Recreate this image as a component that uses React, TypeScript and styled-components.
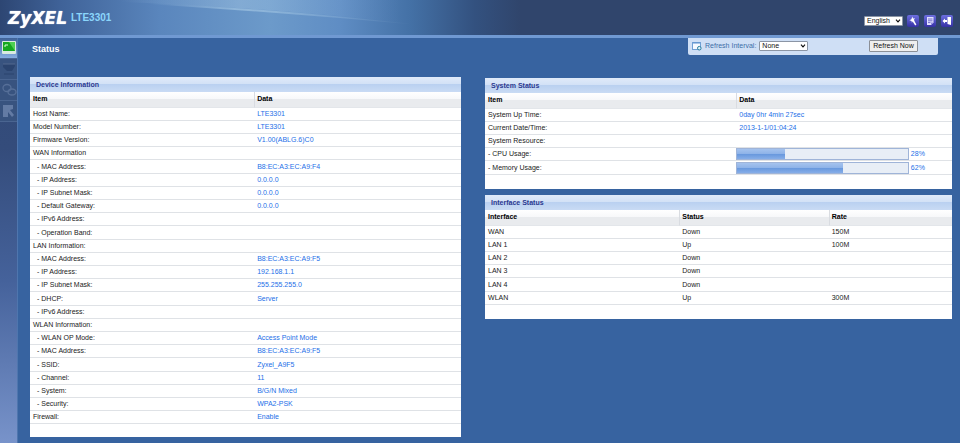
import React from "react";
import styled, { createGlobalStyle, css } from "styled-components";

const GlobalStyle = createGlobalStyle`
  * { box-sizing: border-box; }
  body {
    margin: 0;
    background: #3763a0;
    font-family: "Liberation Sans", Arial, sans-serif;
    font-size: 7px;
    line-height: 12px;
    color: #222;
  }
`;

const Page = styled.div`
  min-height: 100vh;
  display: flex;
  flex-direction: column;
`;

const Header = styled.header`
  position: relative;
  height: 38px;
  display: flex;
  align-items: center;
  gap: 4px;
  padding: 0 7px 0 8px;
  border-bottom: 3px solid #7099d2;
  background: linear-gradient(90deg, #2d4673 0, #3f6298 60px, #5a86bd 160px, #6c9aca 270px, #5f8dc4 340px, #4471a6 410px, #33517f 475px, #30456c 520px);
`;

const Swoosh = styled.svg`
  position: absolute;
  left: 0;
  top: 0;
  width: 460px;
  height: 35px;
`;

const Logo = styled.span`
  position: relative;
  font: italic bold 17px/34px "DejaVu Sans", sans-serif;
  color: #fff;
  text-shadow: 0 0 1px #fff;
`;

const Model = styled.span`
  position: relative;
  flex: 1;
  font-size: 10px;
  font-weight: bold;
  line-height: 32px;
  color: #8bd6fb;
`;

const Tools = styled.div`
  display: flex;
  align-items: center;
  gap: 4px;
  padding-top: 7px;
`;

const SelectBox = styled.span<{ $width: number }>`
  position: relative;
  display: flex;
  width: ${(p) => p.$width}px;
`;

const Select = styled.select`
  appearance: none;
  width: 100%;
  height: 10px;
  padding: 0 2px;
  border: 1px solid #8b95a5;
  border-radius: 1px;
  background: #fff;
  color: #111;
  font: 7px/8px "Liberation Sans", Arial, sans-serif;
`;

const Chevron = styled.svg`
  position: absolute;
  right: 2px;
  top: 3px;
  width: 6px;
  height: 4px;
  pointer-events: none;
`;

const IconButton = styled.button`
  width: 12px;
  height: 12px;
  padding: 0;
  border: 0;
  border-radius: 2px;
  background: linear-gradient(#6d6fe0, #3531a4);
  display: flex;
  & + & { margin-left: 1px; }
`;

const Body = styled.div`
  flex: 1;
  display: flex;
`;

const Sidebar = styled.nav`
  width: 18px;
  display: flex;
  flex-direction: column;
  background: linear-gradient(#314a78, #344c7b 110px, #45629b 60%, #7893ca);
  border-right: 1px solid #4f76ae;
`;

const NavItem = styled.a<{ $active?: boolean }>`
  height: 21px;
  display: flex;
  justify-content: center;
  align-items: center;
  border-bottom: 1px solid #4a6591;
  background: ${(p) => (p.$active ? "linear-gradient(#3f6298, #86ade0)" : "#38537f")};
`;

const Main = styled.main`
  flex: 1;
  min-width: 0;
  padding: 0 8px 6px 12px;
`;

const TopRow = styled.div`
  display: flex;
  justify-content: space-between;
  align-items: flex-start;
  padding: 0 14px 0 2px;
  margin-bottom: 22px;
`;

const Title = styled.h1`
  margin: 5px 0 0;
  font-size: 9px;
  line-height: 12px;
  color: #fff;
`;

const RefreshBar = styled.div`
  width: 250px;
  height: 17px;
  display: flex;
  align-items: center;
  gap: 3px;
  padding: 0 20px 1px 4px;
  border-radius: 0 0 2px 2px;
  background: #cfdff5;
  color: #3d6ea8;
`;

const RefreshButton = styled.button`
  width: 49px;
  height: 12px;
  margin-left: auto;
  padding: 0;
  border: 1px solid #8b8f96;
  border-radius: 1px;
  background: #efefef;
  color: #111;
  font: 7px/10px "Liberation Sans", Arial, sans-serif;
`;

const Panels = styled.div`
  display: grid;
  grid-template-columns: 12fr 13fr;
  gap: 24px;
  align-items: start;
`;

const Column = styled.div`
  display: flex;
  flex-direction: column;
  gap: 6px;
  padding-top: 1px;
`;

const Panel = styled.section<{ $space: number }>`
  padding-bottom: ${(p) => p.$space}px;
  background: #fff;
`;

const PanelTitle = styled.h2`
  margin: 0;
  padding: 1px 6px 0;
  height: 15px;
  font-size: 7px;
  line-height: 14px;
  color: #2b3990;
  background: linear-gradient(#e0eaf9, #d2e1f6 7px, #b9d0f0 7px, #c9dbf4);
`;

const Table = styled.table`
  width: 100%;
  table-layout: fixed;
  border-collapse: separate;
  border-spacing: 0;
`;

const HeadCell = styled.th<{ $width?: string }>`
  width: ${(p) => p.$width ?? "auto"};
  height: 16px;
  padding: 0 3px 2px;
  line-height: 13px;
  text-align: left;
  color: #000;
  background: linear-gradient(#fff, #f7f8fa 7px, #e9ebee 7px, #e9ebee);
  border-bottom: 1px solid #e3e6ea;
  & + & {
    padding-left: 2px;
    border-left: 1px solid #d9dce1;
  }
`;

const Row = styled.tr`
  height: 13px;
  &:nth-child(5n) { height: 14px; }
`;

const Cell = styled.td<{ $sub?: boolean; $value?: boolean; $flush?: boolean }>`
  padding: 0 3px;
  line-height: 12px;
  border-bottom: 1px solid #dfe2e6;
  white-space: nowrap;
  ${(p) => p.$sub && css`padding-left: 7px;`}
  ${(p) => p.$value && css`color: #1d6fe8;`}
  ${(p) => p.$flush && css`padding: 0;`}
`;

const Usage = styled.div`
  display: flex;
  align-items: center;
  gap: 2px;
`;

const Track = styled.div`
  width: 80%;
  height: 12px;
  border: 1px solid #9fb4d8;
  background: #e8eef6;
`;

const Fill = styled.div`
  height: 100%;
  background: linear-gradient(#a5c3ee, #8db2e8 5px, #6797dd 5px, #86aee8);
`;

type Item = [string, string?];

const device: Item[] = [
  ["Host Name:", "LTE3301"],
  ["Model Number:", "LTE3301"],
  ["Firmware Version:", "V1.00(ABLG.6)C0"],
  ["WAN Information"],
  ["- MAC Address:", "B8:EC:A3:EC:A9:F4"],
  ["- IP Address:", "0.0.0.0"],
  ["- IP Subnet Mask:", "0.0.0.0"],
  ["- Default Gateway:", "0.0.0.0"],
  ["- IPv6 Address:"],
  ["- Operation Band:"],
  ["LAN Information:"],
  ["- MAC Address:", "B8:EC:A3:EC:A9:F5"],
  ["- IP Address:", "192.168.1.1"],
  ["- IP Subnet Mask:", "255.255.255.0"],
  ["- DHCP:", "Server"],
  ["- IPv6 Address:"],
  ["WLAN Information:"],
  ["- WLAN OP Mode:", "Access Point Mode"],
  ["- MAC Address:", "B8:EC:A3:EC:A9:F5"],
  ["- SSID:", "Zyxel_A9F5"],
  ["- Channel:", "11"],
  ["- System:", "B/G/N Mixed"],
  ["- Security:", "WPA2-PSK"],
  ["Firewall:", "Enable"],
];

const system: Item[] = [
  ["System Up Time:", "0day 0hr 4min 27sec"],
  ["Current Date/Time:", "2013-1-1/01:04:24"],
  ["System Resource:"],
];

const usage: [string, number][] = [
  ["- CPU Usage:", 28],
  ["- Memory Usage:", 62],
];

const interfaces = [
  ["WAN", "Down", "150M"],
  ["LAN 1", "Up", "100M"],
  ["LAN 2", "Down", ""],
  ["LAN 3", "Down", ""],
  ["LAN 4", "Down", ""],
  ["WLAN", "Up", "300M"],
];

const DropDown = ({ id, label, width, options }: { id: string; label?: string; width: number; options: string[] }) => (
  <SelectBox $width={width}>
    <Select id={id} aria-label={label}>
      {options.map((o) => (
        <option key={o}>{o}</option>
      ))}
    </Select>
    <Chevron viewBox="0 0 6 4" aria-hidden="true">
      <path d="M1 .7 3 2.8 5 .7" fill="none" stroke="#111" strokeWidth="1.2" />
    </Chevron>
  </SelectBox>
);

export default function App() {
  return (
    <Page>
      <GlobalStyle />
      <Header>
        <Swoosh viewBox="0 0 460 35" preserveAspectRatio="none" aria-hidden="true">
          <defs>
            <linearGradient id="upper">
              <stop offset="0.15" stopColor="#b5d4ec" stopOpacity="0" />
              <stop offset="0.45" stopColor="#b5d4ec" stopOpacity="0.35" />
              <stop offset="0.85" stopColor="#8fb6e0" stopOpacity="0" />
            </linearGradient>
            <linearGradient id="beam">
              <stop offset="0.2" stopColor="#c5e2f3" stopOpacity="0" />
              <stop offset="0.45" stopColor="#c5e2f3" stopOpacity="0.45" />
              <stop offset="0.95" stopColor="#c5e2f3" stopOpacity="0" />
            </linearGradient>
          </defs>
          <path d="M60 0Q260 5 430 26L460 0Z" fill="url(#upper)" />
          <path d="M80 0Q260 6 430 26Q260 10 80 0Z" fill="url(#beam)" />
        </Swoosh>
        <Logo>ZyXEL</Logo>
        <Model>LTE3301</Model>
        <Tools>
          <DropDown id="language" label="Language" width={39} options={["English"]} />
          <IconButton aria-label="Wizard">
            <svg width="12" height="12" viewBox="0 0 12 12">
              <path d="M6 5.5 8.8 10" stroke="#fff" strokeWidth="1.5" />
              <path d="M5.3 1.6 6 3.5 8 3.2 6.8 4.9 8 6.5 6 6.1 4.9 7.8 4.5 5.9 2.4 5.2 4.4 4.2Z" fill="#fff" />
            </svg>
          </IconButton>
          <IconButton aria-label="About">
            <svg width="12" height="12" viewBox="0 0 12 12">
              <path d="M3 2h6.5v5.5L7 10H3Z" fill="#e2e2ff" />
              <path d="M4 4h4.5M4 5.8h4.5M4 7.6h2.5" stroke="#5652c0" strokeWidth=".8" />
              <path d="M7 10V7.5h2.5Z" fill="#8f8ce0" />
            </svg>
          </IconButton>
          <IconButton aria-label="Logout">
            <svg width="12" height="12" viewBox="0 0 12 12">
              <path d="M6.5 2H10v8L6.5 9Z" fill="#fff" />
              <path d="M1.5 6 4 3.5V5h2v2H4v1.5Z" fill="#fff" />
            </svg>
          </IconButton>
        </Tools>
      </Header>
      <Body>
        <Sidebar aria-label="Main">
          <NavItem href="#status" aria-label="Status" $active>
            <svg width="16" height="16" viewBox="0 0 16 16">
              <rect x="1" y="1" width="14" height="13" rx="1" fill="#d9eadf" />
              <rect x="2" y="2" width="12" height="9" fill="#16a820" />
              <path d="M8 2h6v9Z" fill="#4fcf52" />
              <path d="M4 7V5h3" stroke="#d8ffd8" fill="none" />
            </svg>
          </NavItem>
          <NavItem href="#monitor" aria-label="Monitor">
            <svg width="14" height="16" viewBox="0 0 14 16">
              <path d="M1 3h12v2l-3 5H5L1 6Z" fill="#2b446f" />
              <path d="M1 3h12" stroke="#52698f" />
              <path d="M2 13h10" stroke="#2b446f" />
            </svg>
          </NavItem>
          <NavItem href="#configuration" aria-label="Configuration">
            <svg width="16" height="16" viewBox="0 0 16 16" fill="none" stroke="#566f98" strokeWidth="1.3">
              <ellipse cx="6" cy="6" rx="4" ry="3.5" />
              <ellipse cx="11" cy="10" rx="4" ry="3" />
            </svg>
          </NavItem>
          <NavItem href="#maintenance" aria-label="Maintenance">
            <svg width="14" height="14" viewBox="0 0 14 14">
              <path d="M1 1h10v4L8 6l4 5-2 2-4-5v5H1Z" fill="#637ba4" />
            </svg>
          </NavItem>
        </Sidebar>
        <Main>
          <TopRow>
            <Title>Status</Title>
            <RefreshBar>
              <svg width="10" height="10" viewBox="0 0 10 10" aria-hidden="true">
                <rect x=".5" y="1.5" width="8" height="7" fill="#f5f9ff" stroke="#6f9fd4" />
                <path d="M1 2h7" stroke="#5b8fce" />
                <circle cx="7.3" cy="7.2" r="1.8" fill="#dff1f7" stroke="#2a7f9f" />
              </svg>
              <label htmlFor="interval">Refresh Interval:</label>
              <DropDown id="interval" width={49} options={["None"]} />
              <RefreshButton>Refresh Now</RefreshButton>
            </RefreshBar>
          </TopRow>
          <Panels>
            <Panel $space={13}>
              <PanelTitle>Device Information</PanelTitle>
              <Table>
                <thead>
                  <tr>
                    <HeadCell $width="52%">Item</HeadCell>
                    <HeadCell>Data</HeadCell>
                  </tr>
                </thead>
                <tbody>
                  {device.map(([label, value], i) => (
                    <Row key={i}>
                      <Cell $sub={label.startsWith("-")}>{label}</Cell>
                      <Cell $value>{value}</Cell>
                    </Row>
                  ))}
                </tbody>
              </Table>
            </Panel>
            <Column>
              <Panel $space={14}>
                <PanelTitle>System Status</PanelTitle>
                <Table>
                  <thead>
                    <tr>
                      <HeadCell $width="53.8%">Item</HeadCell>
                      <HeadCell>Data</HeadCell>
                    </tr>
                  </thead>
                  <tbody>
                    {system.map(([label, value]) => (
                      <Row key={label}>
                        <Cell>{label}</Cell>
                        <Cell $value>{value}</Cell>
                      </Row>
                    ))}
                    {usage.map(([label, percent]) => (
                      <Row key={label}>
                        <Cell>{label}</Cell>
                        <Cell $value $flush>
                          <Usage>
                            <Track>
                              <Fill style={{ width: `${percent}%` }} />
                            </Track>
                            {percent}%
                          </Usage>
                        </Cell>
                      </Row>
                    ))}
                  </tbody>
                </Table>
              </Panel>
              <Panel $space={14}>
                <PanelTitle>Interface Status</PanelTitle>
                <Table>
                  <thead>
                    <tr>
                      <HeadCell $width="41.6%">Interface</HeadCell>
                      <HeadCell $width="32%">Status</HeadCell>
                      <HeadCell>Rate</HeadCell>
                    </tr>
                  </thead>
                  <tbody>
                    {interfaces.map(([name, status, rate]) => (
                      <Row key={name}>
                        <Cell>{name}</Cell>
                        <Cell>{status}</Cell>
                        <Cell>{rate}</Cell>
                      </Row>
                    ))}
                  </tbody>
                </Table>
              </Panel>
            </Column>
          </Panels>
        </Main>
      </Body>
    </Page>
  );
}
